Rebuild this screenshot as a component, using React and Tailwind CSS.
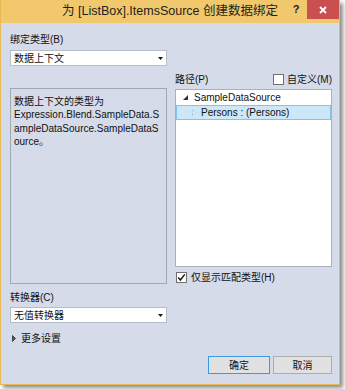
import React from 'react';

const font = { fontFamily: '"Liberation Sans", "Noto Sans CJK SC", sans-serif' };

function DropArrow() {
  return (
    <svg width="5" height="3" viewBox="0 0 5 3" className="mr-[3px]">
      <path d="M0 0h5L2.5 3z" fill="#1a1a1a" />
    </svg>
  );
}

function Combo({ value }) {
  return (
    <div className="flex h-[16px] items-center justify-between border border-[#b6bcc8] bg-white pl-[3px]">
      <span className="text-[10px] leading-[13px] text-[#111]">{value}</span>
      <DropArrow />
    </div>
  );
}

function CheckBox({ checked }) {
  return (
    <div className="flex h-[11px] w-[11px] items-center justify-center border border-[#707070] bg-white">
      {checked && (
        <svg width="9" height="9" viewBox="0 0 9 9">
          <path d="M1.2 4.6l2.2 2.4L7.8 1.4" fill="none" stroke="#1a1a1a" strokeWidth="1.5" />
        </svg>
      )}
    </div>
  );
}

export default function App() {
  return (
    <div className="h-[389px] w-[345px] overflow-hidden bg-white" style={font}>
      <div className="flex h-[385px] w-[340px] flex-col border border-t-0 border-[#e6b955] bg-[#d6dbe9] shadow-[3px_3px_4px_rgba(0,0,0,0.45)]">
        {/* title bar */}
        <div className="flex h-[23px] shrink-0 items-start bg-[#f1c86c] pl-[50px]">
          <div className="flex h-[23px] flex-1 items-center justify-center text-[12.5px] text-[#1e1e1e]">
            为 [ListBox].ItemsSource 创建数据绑定
          </div>
          <div className="mr-[4px] flex h-[19px] w-[14px] items-center justify-center text-[11px] font-bold text-[#222]">?</div>
          <div className="flex h-[19px] w-[32px] items-center justify-center bg-[#c9504f]">
            <svg width="8" height="8" viewBox="0 0 8 8">
              <path d="M1 1l6 6M7 1L1 7" stroke="#fff" strokeWidth="1.8" />
            </svg>
          </div>
        </div>

        <div className="flex flex-1 flex-col pl-[9px] pr-[7px] pt-[10px] text-[10px] leading-[13px] text-[#111]">
          <div className="w-[157px]">
            <div className="h-[13px]">绑定类型(B)</div>
            <div className="mt-[4px]">
              <Combo value="数据上下文" />
            </div>
          </div>

          <div className="mt-[7px] flex gap-[8px]">
            {/* left column */}
            <div className="flex w-[157px] flex-col">
              <div className="mt-[15px] h-[196px] border border-[#a2a7b1] bg-[#d6dbe9] px-[3px] pt-[6px] leading-[13.3px]">
                数据上下文的类型为
                <br />
                Expression.Blend.SampleData.S
                <br />
                ampleDataSource.SampleDataS
                <br />
                ource。
              </div>
            </div>

            {/* right column */}
            <div className="flex w-[157px] flex-col">
              <div className="flex h-[13px] items-center justify-between">
                <span>路径(P)</span>
                <div className="flex items-center gap-[3px]">
                  <CheckBox />
                  <span>自定义(M)</span>
                </div>
              </div>
              <div className="mt-[3px] h-[178px] border border-[#aab0bc] bg-white">
                <div className="flex h-[15px] items-center pl-[7px]">
                  <svg width="5" height="5" viewBox="0 0 5 5">
                    <path d="M5 0v5H0z" fill="#333" />
                  </svg>
                  <span className="ml-[6px]">SampleDataSource</span>
                </div>
                <div className="flex h-[15px] items-center border border-[#7fc4ea] bg-[#cce8f8] pl-[15px]">
                  <svg width="4" height="7" viewBox="0 0 4 7">
                    <path d="M0.5 0.5L3.5 3.5L0.5 6.5z" fill="#eef6fb" stroke="#a9c6d8" strokeWidth="0.8" />
                  </svg>
                  <span className="ml-[5px]">Persons : (Persons)</span>
                </div>
              </div>
              <div className="mt-[4px] flex h-[13px] items-center gap-[4px] pl-[1px]">
                <CheckBox checked />
                <span>仅显示匹配类型(H)</span>
              </div>
            </div>
          </div>

          <div className="w-[157px]">
            <div className="mt-[7px] h-[13px]">转换器(C)</div>
            <div className="mt-[3px]">
              <Combo value="无值转换器" />
            </div>
          </div>

          <div className="mt-[9px] flex h-[13px] items-center pl-[2px]">
            <svg width="4" height="7" viewBox="0 0 4 7">
              <path d="M0.5 0.5L3.5 3.5L0.5 6.5z" fill="#555" stroke="#333" strokeWidth="0.8" />
            </svg>
            <span className="ml-[5px]">更多设置</span>
          </div>

          <div className="mt-[11px] flex justify-end gap-[3px]">
            <button className="flex h-[18px] w-[62px] items-center justify-center border border-[#3c9be0] bg-[#e1e1e1] text-[10px]">
              确定
            </button>
            <button className="flex h-[18px] w-[59px] items-center justify-center border border-[#adadad] bg-[#e1e1e1] text-[10px]">
              取消
            </button>
          </div>
        </div>
      </div>
    </div>
  );
}
